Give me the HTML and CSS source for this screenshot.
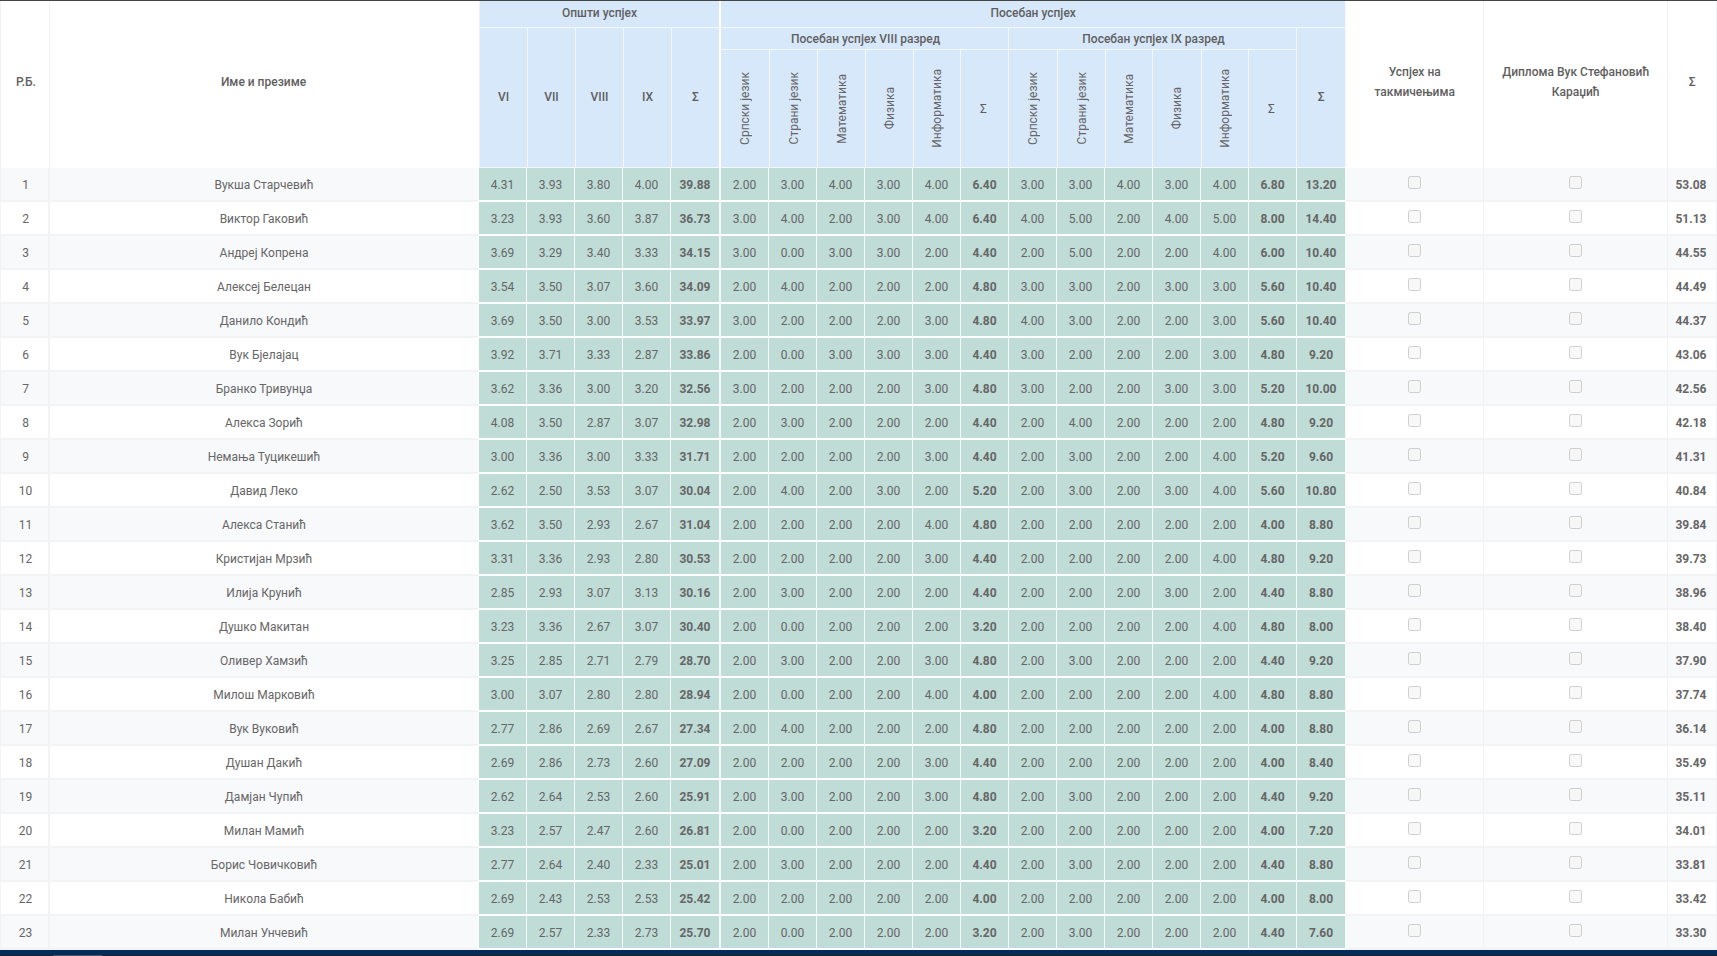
FILE: index.html
```html
<!DOCTYPE html>
<html lang="sr">
<head>
    <meta charset="UTF-8">
    <title>Ранг листа</title>
    <link rel="stylesheet" href="styles.css">
</head>
<body>
    <div class="rank-list">
        <table class="head-table">
            <colgroup>
                <col class="c-rb"><col class="c-name"><col class="c-48"><col class="c-48"><col class="c-48"><col class="c-48"><col class="c-49">
                <col class="c-49"><col class="c-48"><col class="c-48"><col class="c-48"><col class="c-47"><col class="c-48">
                <col class="c-49"><col class="c-48"><col class="c-47"><col class="c-49"><col class="c-47"><col class="c-48">
                <col class="c-49"><col class="c-comp"><col class="c-dipl"><col class="c-49">
            </colgroup>
            <thead>
                <tr class="head-top">
                    <th rowspan="3" class="plain rb">Р.Б.</th>
                    <th rowspan="3" class="plain full-name">Име и презиме</th>
                    <th colspan="5" class="blue top-title group-end">Општи успјех</th>
                    <th colspan="13" class="blue top-title">Посебан успјех</th>
                    <th rowspan="3" class="plain">Успјех на<br>такмичењима</th>
                    <th rowspan="3" class="plain">Диплома Вук Стефановић<br>Караџић</th>
                    <th rowspan="3" class="plain">Σ</th>
                </tr>
                <tr class="head-mid">
                    <th rowspan="2" class="blue grade">VI</th>
                    <th rowspan="2" class="blue grade">VII</th>
                    <th rowspan="2" class="blue grade">VIII</th>
                    <th rowspan="2" class="blue grade">IX</th>
                    <th rowspan="2" class="blue grade group-end">Σ</th>
                    <th colspan="6" class="blue year-title">Посебан успјех VIII разред</th>
                    <th colspan="6" class="blue year-title">Посебан успјех IX разред</th>
                    <th rowspan="2" class="blue grade">Σ</th>
                </tr>
                <tr class="head-sub">
                    <th class="blue"><span class="rotated">Српски језик</span></th>
                    <th class="blue"><span class="rotated">Страни језик</span></th>
                    <th class="blue"><span class="rotated">Математика</span></th>
                    <th class="blue"><span class="rotated">Физика</span></th>
                    <th class="blue"><span class="rotated">Информатика</span></th>
                    <th class="blue sub-sum">Σ</th>
                    <th class="blue"><span class="rotated">Српски језик</span></th>
                    <th class="blue"><span class="rotated">Страни језик</span></th>
                    <th class="blue"><span class="rotated">Математика</span></th>
                    <th class="blue"><span class="rotated">Физика</span></th>
                    <th class="blue"><span class="rotated">Информатика</span></th>
                    <th class="blue sub-sum">Σ</th>
                </tr>
            </thead>
        </table>

        <table class="body-table">
            <colgroup>
                <col class="c-rb"><col class="c-name-b"><col class="c-48"><col class="c-48"><col class="c-48"><col class="c-48"><col class="c-50">
                <col class="c-48"><col class="c-48"><col class="c-48"><col class="c-48"><col class="c-48"><col class="c-48">
                <col class="c-48"><col class="c-48"><col class="c-48"><col class="c-48"><col class="c-48"><col class="c-48">
                <col class="c-49"><col class="c-comp"><col class="c-dipl"><col class="c-49">
            </colgroup>
            <tbody>
                <tr><td>1</td><td>Вукша Старчевић</td><td>4.31</td><td>3.93</td><td>3.80</td><td>4.00</td><td>39.88</td><td>2.00</td><td>3.00</td><td>4.00</td><td>3.00</td><td>4.00</td><td>6.40</td><td>3.00</td><td>3.00</td><td>4.00</td><td>3.00</td><td>4.00</td><td>6.80</td><td>13.20</td><td><input type="checkbox" disabled></td><td><input type="checkbox" disabled></td><td>53.08</td></tr>
                <tr><td>2</td><td>Виктор Гаковић</td><td>3.23</td><td>3.93</td><td>3.60</td><td>3.87</td><td>36.73</td><td>3.00</td><td>4.00</td><td>2.00</td><td>3.00</td><td>4.00</td><td>6.40</td><td>4.00</td><td>5.00</td><td>2.00</td><td>4.00</td><td>5.00</td><td>8.00</td><td>14.40</td><td><input type="checkbox" disabled></td><td><input type="checkbox" disabled></td><td>51.13</td></tr>
                <tr><td>3</td><td>Андреј Копрена</td><td>3.69</td><td>3.29</td><td>3.40</td><td>3.33</td><td>34.15</td><td>3.00</td><td>0.00</td><td>3.00</td><td>3.00</td><td>2.00</td><td>4.40</td><td>2.00</td><td>5.00</td><td>2.00</td><td>2.00</td><td>4.00</td><td>6.00</td><td>10.40</td><td><input type="checkbox" disabled></td><td><input type="checkbox" disabled></td><td>44.55</td></tr>
                <tr><td>4</td><td>Алексеј Белецан</td><td>3.54</td><td>3.50</td><td>3.07</td><td>3.60</td><td>34.09</td><td>2.00</td><td>4.00</td><td>2.00</td><td>2.00</td><td>2.00</td><td>4.80</td><td>3.00</td><td>3.00</td><td>2.00</td><td>3.00</td><td>3.00</td><td>5.60</td><td>10.40</td><td><input type="checkbox" disabled></td><td><input type="checkbox" disabled></td><td>44.49</td></tr>
                <tr><td>5</td><td>Данило Кондић</td><td>3.69</td><td>3.50</td><td>3.00</td><td>3.53</td><td>33.97</td><td>3.00</td><td>2.00</td><td>2.00</td><td>2.00</td><td>3.00</td><td>4.80</td><td>4.00</td><td>3.00</td><td>2.00</td><td>2.00</td><td>3.00</td><td>5.60</td><td>10.40</td><td><input type="checkbox" disabled></td><td><input type="checkbox" disabled></td><td>44.37</td></tr>
                <tr><td>6</td><td>Вук Бјелајац</td><td>3.92</td><td>3.71</td><td>3.33</td><td>2.87</td><td>33.86</td><td>2.00</td><td>0.00</td><td>3.00</td><td>3.00</td><td>3.00</td><td>4.40</td><td>3.00</td><td>2.00</td><td>2.00</td><td>2.00</td><td>3.00</td><td>4.80</td><td>9.20</td><td><input type="checkbox" disabled></td><td><input type="checkbox" disabled></td><td>43.06</td></tr>
                <tr><td>7</td><td>Бранко Тривунџа</td><td>3.62</td><td>3.36</td><td>3.00</td><td>3.20</td><td>32.56</td><td>3.00</td><td>2.00</td><td>2.00</td><td>2.00</td><td>3.00</td><td>4.80</td><td>3.00</td><td>2.00</td><td>2.00</td><td>3.00</td><td>3.00</td><td>5.20</td><td>10.00</td><td><input type="checkbox" disabled></td><td><input type="checkbox" disabled></td><td>42.56</td></tr>
                <tr><td>8</td><td>Алекса Зорић</td><td>4.08</td><td>3.50</td><td>2.87</td><td>3.07</td><td>32.98</td><td>2.00</td><td>3.00</td><td>2.00</td><td>2.00</td><td>2.00</td><td>4.40</td><td>2.00</td><td>4.00</td><td>2.00</td><td>2.00</td><td>2.00</td><td>4.80</td><td>9.20</td><td><input type="checkbox" disabled></td><td><input type="checkbox" disabled></td><td>42.18</td></tr>
                <tr><td>9</td><td>Немања Туцикешић</td><td>3.00</td><td>3.36</td><td>3.00</td><td>3.33</td><td>31.71</td><td>2.00</td><td>2.00</td><td>2.00</td><td>2.00</td><td>3.00</td><td>4.40</td><td>2.00</td><td>3.00</td><td>2.00</td><td>2.00</td><td>4.00</td><td>5.20</td><td>9.60</td><td><input type="checkbox" disabled></td><td><input type="checkbox" disabled></td><td>41.31</td></tr>
                <tr><td>10</td><td>Давид Леко</td><td>2.62</td><td>2.50</td><td>3.53</td><td>3.07</td><td>30.04</td><td>2.00</td><td>4.00</td><td>2.00</td><td>3.00</td><td>2.00</td><td>5.20</td><td>2.00</td><td>3.00</td><td>2.00</td><td>3.00</td><td>4.00</td><td>5.60</td><td>10.80</td><td><input type="checkbox" disabled></td><td><input type="checkbox" disabled></td><td>40.84</td></tr>
                <tr><td>11</td><td>Алекса Станић</td><td>3.62</td><td>3.50</td><td>2.93</td><td>2.67</td><td>31.04</td><td>2.00</td><td>2.00</td><td>2.00</td><td>2.00</td><td>4.00</td><td>4.80</td><td>2.00</td><td>2.00</td><td>2.00</td><td>2.00</td><td>2.00</td><td>4.00</td><td>8.80</td><td><input type="checkbox" disabled></td><td><input type="checkbox" disabled></td><td>39.84</td></tr>
                <tr><td>12</td><td>Кристијан Мрзић</td><td>3.31</td><td>3.36</td><td>2.93</td><td>2.80</td><td>30.53</td><td>2.00</td><td>2.00</td><td>2.00</td><td>2.00</td><td>3.00</td><td>4.40</td><td>2.00</td><td>2.00</td><td>2.00</td><td>2.00</td><td>4.00</td><td>4.80</td><td>9.20</td><td><input type="checkbox" disabled></td><td><input type="checkbox" disabled></td><td>39.73</td></tr>
                <tr><td>13</td><td>Илија Крунић</td><td>2.85</td><td>2.93</td><td>3.07</td><td>3.13</td><td>30.16</td><td>2.00</td><td>3.00</td><td>2.00</td><td>2.00</td><td>2.00</td><td>4.40</td><td>2.00</td><td>2.00</td><td>2.00</td><td>3.00</td><td>2.00</td><td>4.40</td><td>8.80</td><td><input type="checkbox" disabled></td><td><input type="checkbox" disabled></td><td>38.96</td></tr>
                <tr><td>14</td><td>Душко Макитан</td><td>3.23</td><td>3.36</td><td>2.67</td><td>3.07</td><td>30.40</td><td>2.00</td><td>0.00</td><td>2.00</td><td>2.00</td><td>2.00</td><td>3.20</td><td>2.00</td><td>2.00</td><td>2.00</td><td>2.00</td><td>4.00</td><td>4.80</td><td>8.00</td><td><input type="checkbox" disabled></td><td><input type="checkbox" disabled></td><td>38.40</td></tr>
                <tr><td>15</td><td>Оливер Хамзић</td><td>3.25</td><td>2.85</td><td>2.71</td><td>2.79</td><td>28.70</td><td>2.00</td><td>3.00</td><td>2.00</td><td>2.00</td><td>3.00</td><td>4.80</td><td>2.00</td><td>3.00</td><td>2.00</td><td>2.00</td><td>2.00</td><td>4.40</td><td>9.20</td><td><input type="checkbox" disabled></td><td><input type="checkbox" disabled></td><td>37.90</td></tr>
                <tr><td>16</td><td>Милош Марковић</td><td>3.00</td><td>3.07</td><td>2.80</td><td>2.80</td><td>28.94</td><td>2.00</td><td>0.00</td><td>2.00</td><td>2.00</td><td>4.00</td><td>4.00</td><td>2.00</td><td>2.00</td><td>2.00</td><td>2.00</td><td>4.00</td><td>4.80</td><td>8.80</td><td><input type="checkbox" disabled></td><td><input type="checkbox" disabled></td><td>37.74</td></tr>
                <tr><td>17</td><td>Вук Вуковић</td><td>2.77</td><td>2.86</td><td>2.69</td><td>2.67</td><td>27.34</td><td>2.00</td><td>4.00</td><td>2.00</td><td>2.00</td><td>2.00</td><td>4.80</td><td>2.00</td><td>2.00</td><td>2.00</td><td>2.00</td><td>2.00</td><td>4.00</td><td>8.80</td><td><input type="checkbox" disabled></td><td><input type="checkbox" disabled></td><td>36.14</td></tr>
                <tr><td>18</td><td>Душан Дакић</td><td>2.69</td><td>2.86</td><td>2.73</td><td>2.60</td><td>27.09</td><td>2.00</td><td>2.00</td><td>2.00</td><td>2.00</td><td>3.00</td><td>4.40</td><td>2.00</td><td>2.00</td><td>2.00</td><td>2.00</td><td>2.00</td><td>4.00</td><td>8.40</td><td><input type="checkbox" disabled></td><td><input type="checkbox" disabled></td><td>35.49</td></tr>
                <tr><td>19</td><td>Дамјан Чупић</td><td>2.62</td><td>2.64</td><td>2.53</td><td>2.60</td><td>25.91</td><td>2.00</td><td>3.00</td><td>2.00</td><td>2.00</td><td>3.00</td><td>4.80</td><td>2.00</td><td>3.00</td><td>2.00</td><td>2.00</td><td>2.00</td><td>4.40</td><td>9.20</td><td><input type="checkbox" disabled></td><td><input type="checkbox" disabled></td><td>35.11</td></tr>
                <tr><td>20</td><td>Милан Мамић</td><td>3.23</td><td>2.57</td><td>2.47</td><td>2.60</td><td>26.81</td><td>2.00</td><td>0.00</td><td>2.00</td><td>2.00</td><td>2.00</td><td>3.20</td><td>2.00</td><td>2.00</td><td>2.00</td><td>2.00</td><td>2.00</td><td>4.00</td><td>7.20</td><td><input type="checkbox" disabled></td><td><input type="checkbox" disabled></td><td>34.01</td></tr>
                <tr><td>21</td><td>Борис Човичковић</td><td>2.77</td><td>2.64</td><td>2.40</td><td>2.33</td><td>25.01</td><td>2.00</td><td>3.00</td><td>2.00</td><td>2.00</td><td>2.00</td><td>4.40</td><td>2.00</td><td>3.00</td><td>2.00</td><td>2.00</td><td>2.00</td><td>4.40</td><td>8.80</td><td><input type="checkbox" disabled></td><td><input type="checkbox" disabled></td><td>33.81</td></tr>
                <tr><td>22</td><td>Никола Бабић</td><td>2.69</td><td>2.43</td><td>2.53</td><td>2.53</td><td>25.42</td><td>2.00</td><td>2.00</td><td>2.00</td><td>2.00</td><td>2.00</td><td>4.00</td><td>2.00</td><td>2.00</td><td>2.00</td><td>2.00</td><td>2.00</td><td>4.00</td><td>8.00</td><td><input type="checkbox" disabled></td><td><input type="checkbox" disabled></td><td>33.42</td></tr>
                <tr><td>23</td><td>Милан Унчевић</td><td>2.69</td><td>2.57</td><td>2.33</td><td>2.73</td><td>25.70</td><td>2.00</td><td>0.00</td><td>2.00</td><td>2.00</td><td>2.00</td><td>3.20</td><td>2.00</td><td>3.00</td><td>2.00</td><td>2.00</td><td>2.00</td><td>4.40</td><td>7.60</td><td><input type="checkbox" disabled></td><td><input type="checkbox" disabled></td><td>33.30</td></tr>
            </tbody>
        </table>
    </div>

    <div class="footer-bar"></div>
    <div class="scroll-track">
        <div class="scroll-thumb"></div>
    </div>
</body>
</html>
```

FILE: styles.css
```css
html, body {
    margin: 0;
    height: 956px;
    overflow: hidden;
    background-color: #fff;
}
body {
    font-family: Roboto, "Noto Sans", sans-serif;
    font-size: 12px;
    color: #666;
}
.rank-list {
    border-top: 1px solid #444;
}
table {
    width: 1717px;
    table-layout: fixed;
    border-collapse: separate;
    border-spacing: 0;
}
.c-rb { width: 50px; }
.c-name { width: 430px; }
.c-name-b { width: 429px; }
.c-47 { width: 47px; }
.c-48 { width: 48px; }
.c-49 { width: 49px; }
.c-50 { width: 50px; }
.c-comp { width: 138px; }
.c-dipl { width: 184px; }

/* header */
.head-table th {
    padding: 0;
    font-weight: 500;
    color: #5f5f5f;
    text-align: center;
    vertical-align: middle;
    line-height: 20px;
}
.head-top { height: 27px; }
.head-mid { height: 22px; }
.head-sub { height: 118px; }
.head-table .plain {
    background-color: #fff;
    border-right: 1px solid #f0f2f4;
    padding-bottom: 5px;
}
.head-table .plain:first-child {
    border-left: 1px solid #f0f2f4;
}
.head-table .rb {
    padding-left: 2px;
}
.head-table .full-name {
    padding-right: 2px;
}
.head-table .blue {
    background-color: #d8e8fb;
    border-right: 1px solid #f4f8fd;
    border-bottom: 1px solid #f4f8fd;
}
.head-table .top-title {
    padding-bottom: 2px;
}
.head-table .year-title {
    padding-left: 2px;
}
.head-table .grade {
    padding-bottom: 2px;
}
.head-table .sub-sum {
    padding-right: 2px;
    font-weight: 400;
}
.head-table .group-end {
    border-right: 2px solid #fff;
}
.rotated {
    display: inline-block;
    writing-mode: vertical-rl;
    transform: rotate(180deg);
    vertical-align: middle;
    font-weight: 400;
    color: #666;
    line-height: 16px;
}

/* body */
.body-table td {
    height: 34px;
    box-sizing: border-box;
    padding: 2px 0 0;
    text-align: center;
    vertical-align: middle;
    border-bottom: 2px solid #f1f3f5;
    border-right: 1px solid #f1f3f5;
}
.body-table td:first-child {
    border-left: 1px solid #f1f3f5;
    border-right-width: 2px;
    padding-left: 2px;
}
.body-table tr:nth-child(odd) td {
    background-color: #f8f9fb;
}
.body-table td:nth-child(2) {
    border-right-color: #fff;
}
.body-table tr td:nth-child(n+3):nth-child(-n+20) {
    background-color: #bfdcd7;
    border-right-color: #f4f8f7;
    border-bottom-color: #fff;
}
.body-table tr td:nth-child(7) {
    border-right: 2px solid #fff;
}
.body-table td:nth-child(7),
.body-table td:nth-child(13),
.body-table td:nth-child(19),
.body-table td:nth-child(20),
.body-table td:nth-child(23) {
    font-weight: 700;
}
.body-table td:nth-child(23) {
    padding-right: 2px;
}
.body-table input[type="checkbox"] {
    margin: 0 3px 5px;
    vertical-align: middle;
}

/* bottom */
.footer-bar {
    height: 5px;
    background-color: #032b5c;
}
.scroll-track {
    height: 2px;
    padding-left: 53px;
    background-color: #222;
}
.scroll-thumb {
    width: 49px;
    height: 2px;
    background-color: #555;
}
```
